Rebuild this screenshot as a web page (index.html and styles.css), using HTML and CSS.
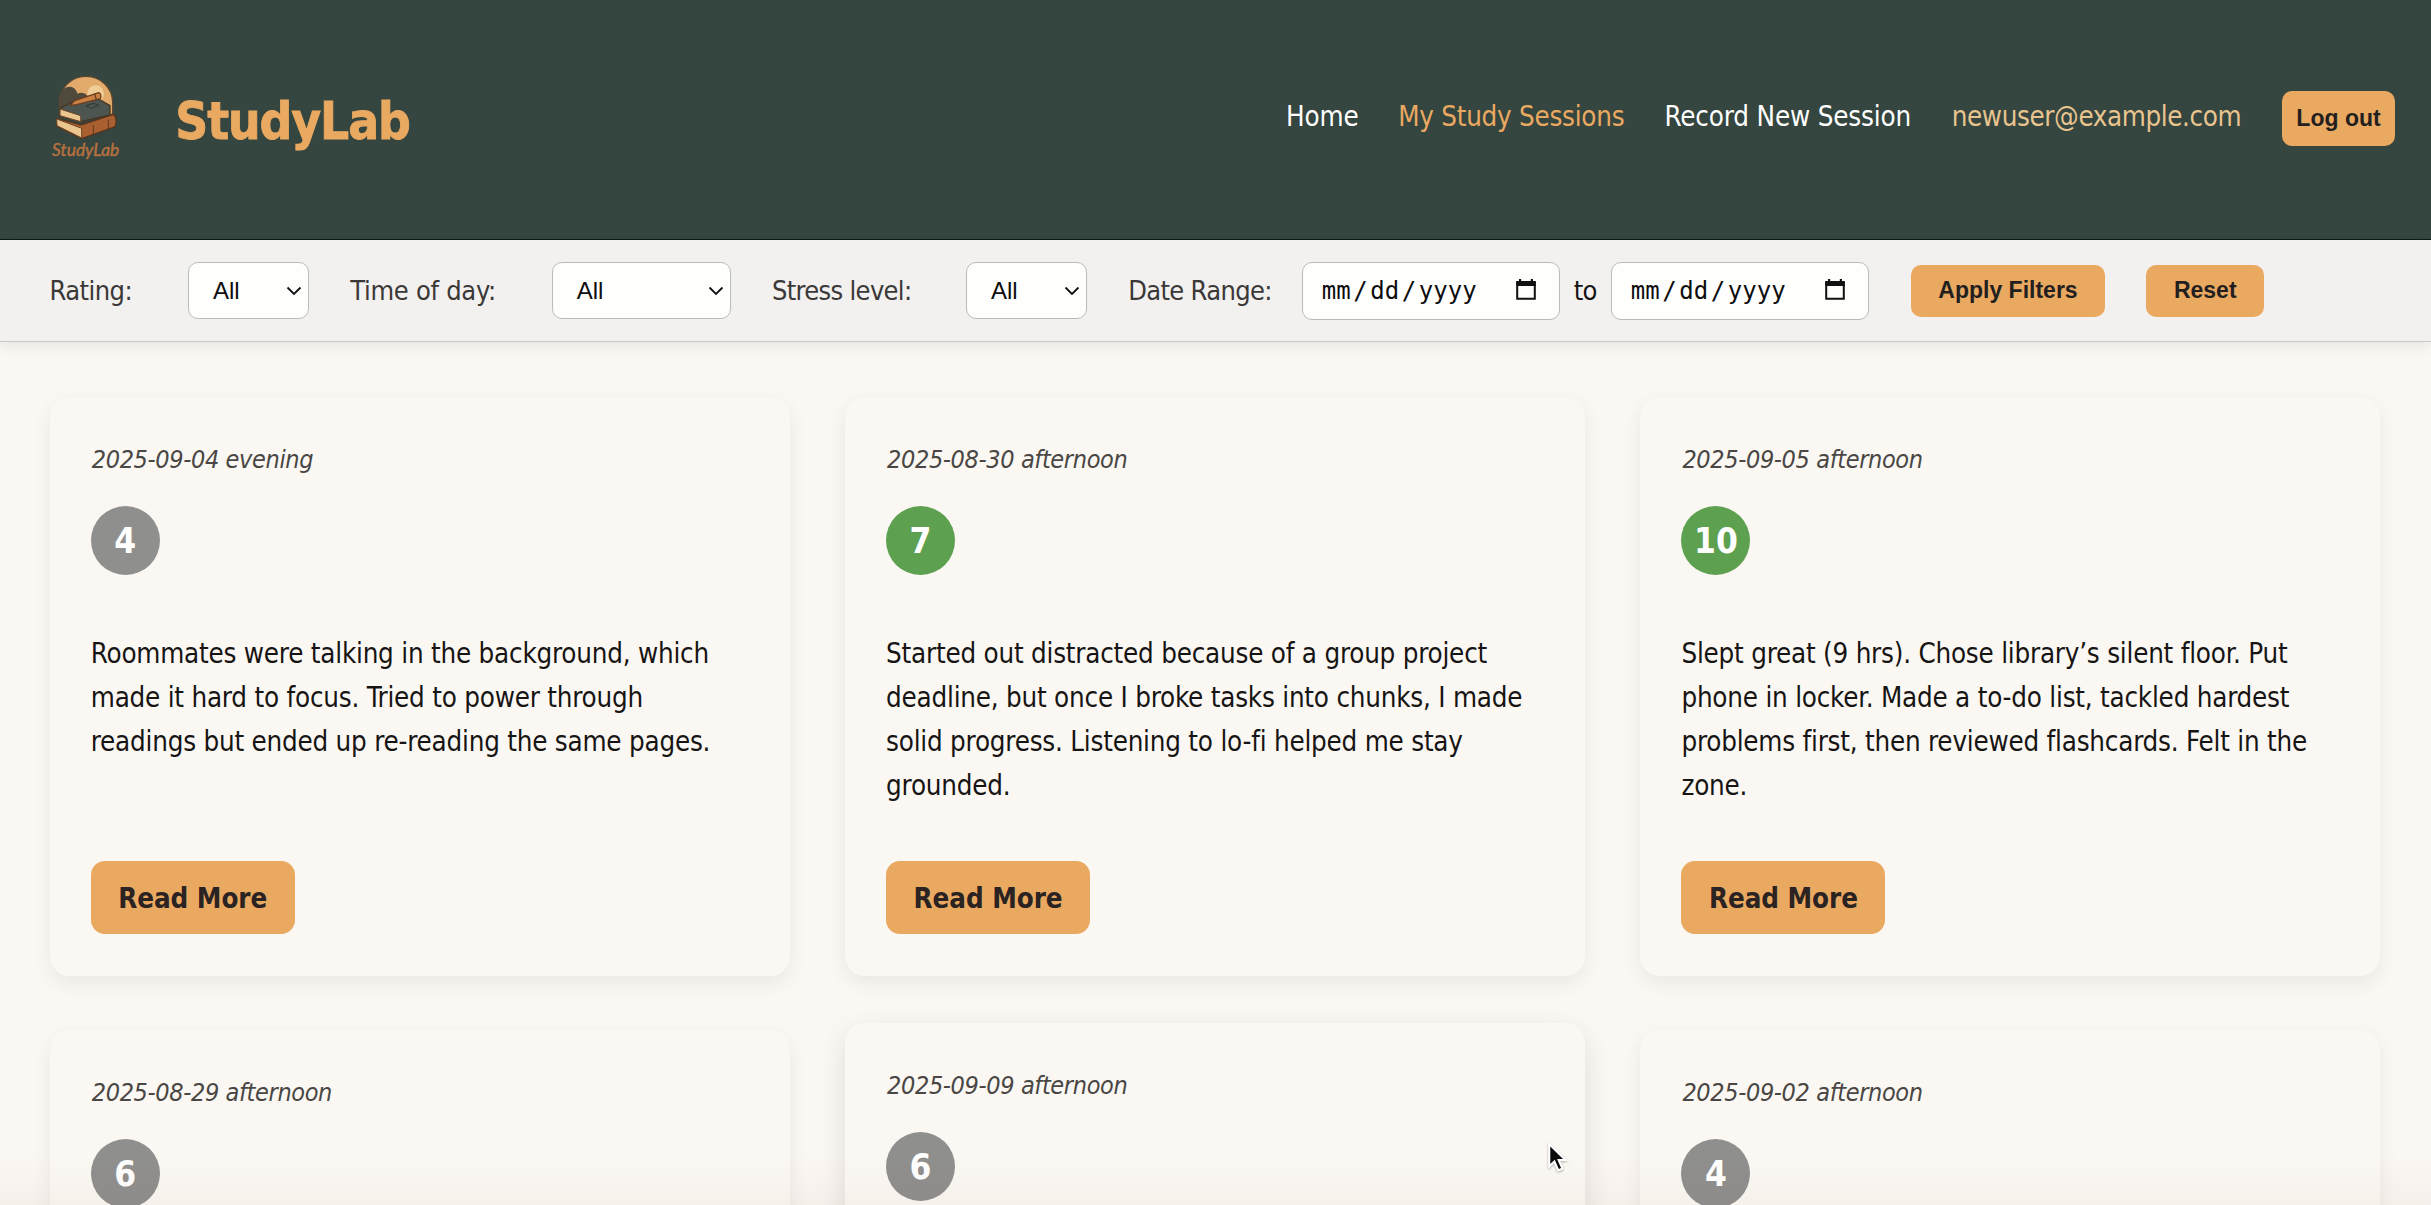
FILE: index.html
```html
<!DOCTYPE html>
<html lang="en">
<head>
<meta charset="utf-8">
<title>StudyLab</title>
<link rel="stylesheet" href="styles.css">
</head>
<body>
<header class="header">
  <svg class="logo" viewBox="60 45 215 265">
    <path d="M88 166V130a80 78 0 0 1 160 0v36z" fill="#e2ab6b" stroke="#5b4630" stroke-width="4"/>
    <circle cx="197" cy="104" r="25" fill="#f0cd97"/>
    <path d="M90 160V112c2-34 46-40 52-8 16-8 34 2 34 18v30z" fill="#4f4a3c"/>
    <path d="M80 178l74 20 96-32c10 6 11 26 4 38l-99 35-76-38 4-14z" fill="#a95f30" stroke="#54341d" stroke-width="4" stroke-linejoin="round"/>
    <path d="M80 180l75 28v29l-74-37z" fill="#ecc68f" stroke="#6a4527" stroke-width="3"/>
    <path d="M190 198v28M235 182v28" stroke="#54341d" stroke-width="2.5"/>
    <path d="M90 148l30-16 86-12 34 20v28l-88 20-64-18z" fill="#4d5550" stroke="#463522" stroke-width="4" stroke-linejoin="round"/>
    <path d="M90 150l62 20v18l-62-18z" fill="#ecc68f" stroke="#6a4527" stroke-width="3"/>
    <path d="M168 140l22-7 16 6-22 9z" fill="none" stroke="#2f3331" stroke-width="2.5"/>
    <path d="M120 139l14-14 72-24c7 2 9 12 5 18l-71 18z" fill="#c98243" stroke="#6a3d1e" stroke-width="3.5" stroke-linejoin="round"/>
    <path d="M194 105l5 17" stroke="#6a3d1e" stroke-width="4"/>
    <text class="logo-text" x="66" y="290" textLength="202" lengthAdjust="spacingAndGlyphs">StudyLab</text>
  </svg>
  <h1 class="brand">StudyLab</h1>
  <nav class="nav">
    <a class="link home">Home</a>
    <a class="link active">My Study Sessions</a>
    <a class="link record">Record New Session</a>
    <a class="link email">newuser@example.com</a>
    <button class="logout">Log out</button>
  </nav>
</header>

<section class="filters">
  <div class="field rating"><label>Rating:</label>
    <div class="select w-short">All<svg class="chev" viewBox="0 0 16 10"><path d="M1.5 1.5L8 8l6.500-6.500"/></svg></div></div>
  <div class="field time"><label>Time of day:</label>
    <div class="select w-long">All<svg class="chev" viewBox="0 0 16 10"><path d="M1.5 1.5L8 8l6.500-6.500"/></svg></div></div>
  <div class="field stress"><label>Stress level:</label>
    <div class="select w-short">All<svg class="chev" viewBox="0 0 16 10"><path d="M1.5 1.5L8 8l6.500-6.500"/></svg></div></div>
  <div class="field dates"><label>Date Range:</label>
    <div class="range">
      <div class="date">mm<i>/</i>dd<i>/</i>yyyy<svg class="cal" viewBox="0 0 20 22"><path d="M1.200 4h17.600v15.800H1.200z" fill="none" stroke="#111" stroke-width="2"/><path d="M.2 2h19.600v5H.2zM3 0h2.200v3H3zM14.800 0H17v3h-2.200z" fill="#111"/></svg></div>
      <span class="to">to</span>
      <div class="date">mm<i>/</i>dd<i>/</i>yyyy<svg class="cal" viewBox="0 0 20 22"><path d="M1.200 4h17.600v15.800H1.200z" fill="none" stroke="#111" stroke-width="2"/><path d="M.2 2h19.600v5H.2zM3 0h2.200v3H3zM14.800 0H17v3h-2.200z" fill="#111"/></svg></div>
    </div></div>
  <button class="apply">Apply Filters</button>
  <button class="reset">Reset</button>
</section>

<main class="grid">
  <article class="card">
    <p class="when">2025-09-04 evening</p>
    <div class="badge">4</div>
    <p class="notes">Roommates were talking in the background, which<br>made it hard to focus. Tried to power through<br>readings but ended up re-reading the same pages.</p>
    <a class="more">Read More</a>
  </article>
  <article class="card">
    <p class="when">2025-08-30 afternoon</p>
    <div class="badge good">7</div>
    <p class="notes">Started out distracted because of a group project<br>deadline, but once I broke tasks into chunks, I made<br>solid progress. Listening to lo-fi helped me stay<br>grounded.</p>
    <a class="more">Read More</a>
  </article>
  <article class="card">
    <p class="when">2025-09-05 afternoon</p>
    <div class="badge good">10</div>
    <p class="notes">Slept great (9 hrs). Chose library’s silent floor. Put<br>phone in locker. Made a to-do list, tackled hardest<br>problems first, then reviewed flashcards. Felt in the<br>zone.</p>
    <a class="more">Read More</a>
  </article>
  <article class="card">
    <p class="when">2025-08-29 afternoon</p>
    <div class="badge">6</div>
  </article>
  <article class="card hovered">
    <p class="when">2025-09-09 afternoon</p>
    <div class="badge">6</div>
  </article>
  <article class="card">
    <p class="when">2025-09-02 afternoon</p>
    <div class="badge">4</div>
  </article>
</main>
<div class="fade"></div>
<svg class="cursor" viewBox="0 0 20 30"><path d="M2 2v21.500l5-4.600 3.800 8.600 4-1.800-3.700-8.300h6.700z" fill="#0b0b0b" stroke="#fff" stroke-width="2"/></svg>
</body>
</html>
```
FILE: styles.css
```css
* { box-sizing: border-box; }
body {
  margin: 0;
  height: 1205px;
  overflow: hidden;
  position: relative;
  background: #fbf7f3;
  color: #171414;
  font: 27.5px/44px "DejaVu Sans Condensed", "DejaVu Sans", sans-serif;
}
h1, p { margin: 0; }
button {
  border: 0;
  padding: 0;
  border-radius: 10px;
  background: #eaa961;
  color: #241f1f;
  font: bold 23px "Liberation Sans", Arial, sans-serif;
}

.header {
  display: flex;
  align-items: center;
  height: 240px;
  padding: 0 36px 2px 50px;
  background: #35453f;
  border-bottom: 1px solid #0d1a13;
}
.logo { width: 71.700px; height: 88.300px; overflow: visible; }
.logo-text { font: italic 54px Lato, sans-serif; fill: #b4713f; stroke: #b4713f; stroke-width: 1.500; }
.brand {
  margin-left: 53.500px;
  padding-top: 6px;
  font-size: 51px;
  line-height: 60px;
  letter-spacing: -1.1px;
  color: #eaa961;
  -webkit-text-stroke: .8px #eaa961;
}
.nav { display: flex; align-items: center; gap: 41.250px; margin-left: auto; white-space: nowrap; }
.link { padding-bottom: 5.500px; color: #fff; letter-spacing: -.16px; }
.home { width: 71px; letter-spacing: -.1px; }
.active { width: 225px; letter-spacing: -.26px; color: #eaa961; }
.record { width: 246px; }
.email { width: 289px; letter-spacing: -.4px; color: #e8c48f; }
.logout { width: 113px; height: 55px; }

.filters {
  display: flex;
  align-items: center;
  gap: 41.250px;
  height: 102px;
  padding-left: 49.500px;
  background: #f2f1ef;
  border-bottom: 1px solid #c9c9c7;
  box-shadow: 0 3px 14px rgba(0, 0, 0, .09);
  font-size: 27px;
  letter-spacing: -.55px;
  white-space: nowrap;
}
.field { display: flex; align-items: center; justify-content: space-between; }
label { color: #3b3838; }
.rating { width: 259.500px; }
.time { width: 380.500px; }
.time label { letter-spacing: -.28px; }
.stress { width: 315px; }
.stress label, .dates label { letter-spacing: -.68px; }
.dates { width: 740.500px; }
.range { display: flex; align-items: center; justify-content: space-between; width: 567px; }
.select, .date {
  display: flex;
  align-items: center;
  justify-content: space-between;
  height: 57px;
  background: #fefefd;
  border: 1.500px solid #bbb;
  border-radius: 10px;
  color: #0d0d0d;
}
.select { padding: 0 6px 0 24px; font: 24px "Liberation Sans", Arial, sans-serif; letter-spacing: 0; }
.w-short { width: 121px; }
.w-long { width: 179px; }
.chev { width: 16px; height: 10px; fill: none; stroke: #111; stroke-width: 1.800; }
.date {
  width: 258px;
  height: 58px;
  padding: 0 23px 0 19px;
  font: 24px "DejaVu Sans Mono", monospace;
  letter-spacing: 0;
}
.date i { font-style: normal; margin: 0 2.600px; }
.cal { width: 20px; height: 22px; margin: 0 0 2px auto; }
.to { letter-spacing: -.8px; }
.apply { width: 194px; height: 52px; margin-left: 1px; }
.reset { width: 118px; height: 52px; }

.grid {
  display: grid;
  grid-template-columns: repeat(3, 1fr);
  grid-auto-rows: 579px;
  gap: 54px 55px;
  padding: 54.500px 50.500px 0 49.500px;
}
.card {
  display: flex;
  flex-direction: column;
  align-items: flex-start;
  padding: 41.250px;
  border-radius: 20px;
  background: #fbf8f3;
  box-shadow: 0 7px 20px rgba(0, 0, 0, .065);
  white-space: nowrap;
}
.hovered { transform: translateY(-7px); box-shadow: 0 10px 28px rgba(0, 0, 0, .11); }
.when { padding-left: 1px; font-size: 25px; line-height: 43px; font-style: italic; letter-spacing: -.36px; color: #494644; }
.badge {
  display: grid;
  place-items: center;
  width: 69px;
  height: 69px;
  margin-top: 25.500px;
  border-radius: 50%;
  background: #8f8f8e;
  color: #fff;
  font-weight: bold;
  font-size: 35px;
}
.good { background: #5da050; }
.notes { margin-top: 56px; letter-spacing: -.22px; }
.more {
  display: grid;
  place-items: center;
  width: 204px;
  height: 73px;
  margin-top: auto;
  border-radius: 14px;
  background: #eaa961;
  color: #2a2322;
  font-weight: bold;
  letter-spacing: -.05px;
}
.fade {
  position: absolute;
  inset: auto 0 0;
  height: 50px;
  background: linear-gradient(rgba(120, 60, 40, 0), rgba(120, 60, 40, .04));
}
.cursor { position: absolute; left: 1547px; top: 1142px; width: 21px; height: 31px; filter: drop-shadow(0 1px 1px rgba(0, 0, 0, .3)); }
```
